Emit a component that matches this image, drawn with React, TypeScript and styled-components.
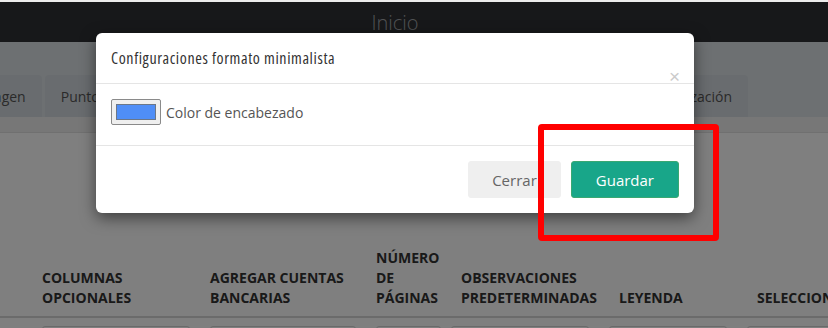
import React from 'react'
import styled, { createGlobalStyle } from 'styled-components'

const GlobalStyle = createGlobalStyle`
  html, body {
    margin: 0;
    padding: 0;
    width: 828px;
    height: 328px;
    overflow: hidden;
    background: #ececec;
    font-family: 'Open Sans', 'Noto Sans', sans-serif;
  }
  * { box-sizing: border-box; }
`

const tabs = ['Imagen', 'Puntos de venta', 'Encabezado', 'Formato']

const columns = [
  { label: 'Columnas opcionales', width: 168 },
  { label: 'Agregar cuentas bancarias', width: 166 },
  { label: 'Número de páginas', width: 85 },
  { label: 'Observaciones predeterminadas', width: 158 },
  { label: 'Leyenda', width: 138 },
  { label: 'Seleccionar', width: 140 },
]

const Frame = styled.div`
  padding-top: 2px;
  height: 328px;
`

const Stage = styled.div`
  position: relative;
  height: 326px;
  overflow: hidden;
  background: #ffffff;
`

const TopBar = styled.header`
  height: 40px;
  background: #2e3035;
  display: flex;
  align-items: center;
  justify-content: center;
  padding-right: 38px;
`

const PageTitle = styled.h1`
  margin: 0;
  font-family: 'Open Sans', sans-serif;
  font-weight: 300;
  font-size: 20px;
  color: #a2a4a8;
`

const TabBar = styled.nav`
  height: 75px;
  background: #dae0e4;
  display: flex;
  align-items: flex-end;
  gap: 3px;
  padding-right: 80px;
`

const Tab = styled.div<{ $first?: boolean; $last?: boolean }>`
  height: 42px;
  display: flex;
  align-items: center;
  padding: 0 16px;
  background: #d3d9de;
  border-radius: 4px 4px 0 0;
  font-size: 14px;
  color: #555;
  white-space: nowrap;
  margin-left: ${(p) => (p.$first ? '-39px' : p.$last ? 'auto' : '0')};
`

const SubStrip = styled.div`
  height: 16px;
  background: #eeeeee;
  border-bottom: 1px solid #e0e0e0;
`

const TableHead = styled.div`
  display: flex;
  align-items: flex-end;
  padding: 0 0 8px 42px;
  margin-top: 115px;
  border-bottom: 2px solid #d6d6d6;
`

const HeadCell = styled.div<{ $w: number; $nowrap?: boolean }>`
  flex: 0 0 ${(p) => p.$w}px;
  padding-right: 12px;
  font-size: 14px;
  font-weight: 700;
  line-height: 20px;
  text-transform: uppercase;
  color: #333;
  white-space: ${(p) => (p.$nowrap ? 'nowrap' : 'normal')};
`

const InputRow = styled.div`
  display: flex;
  padding: 8px 0 0 42px;
`

const FakeInput = styled.div<{ $w: number }>`
  flex: 0 0 ${(p) => p.$w}px;
  margin-right: ${(p) => (p.$w > 100 ? 20 : 10)}px;
  height: 34px;
  border: 1px solid #d4d4d4;
  border-radius: 3px;
`

const Backdrop = styled.div`
  position: absolute;
  inset: 0;
  background: rgba(0, 0, 0, 0.5);
  padding: 31px 0 0 96px;
`

const Modal = styled.div`
  position: relative;
  width: 598px;
  background: #fff;
  border-radius: 6px;
  box-shadow: 0 5px 15px rgba(0, 0, 0, 0.5);
`

const ModalHeader = styled.div`
  position: relative;
  padding: 15px;
  height: 51px;
  border-bottom: 1px solid #e5e5e5;
`

const ModalTitle = styled.h4`
  margin: 0;
  font-family: 'Open Sans', sans-serif;
  font-stretch: condensed;
  font-weight: 400;
  font-size: 16px;
  letter-spacing: 0.6px;
  line-height: 20px;
  color: #333;
`

const Close = styled.button`
  position: absolute;
  right: 14px;
  top: 34px;
  border: 0;
  background: none;
  padding: 0;
  font-family: 'Liberation Sans', sans-serif;
  font-size: 19px;
  line-height: 20px;
  color: #cbcbcb;
  cursor: pointer;
`

const ModalBody = styled.div`
  display: flex;
  align-items: center;
  gap: 5px;
  padding: 15px 15px 20px;
  border-bottom: 1px solid #e5e5e5;
`

const ColorSwatch = styled.div`
  width: 50px;
  height: 26px;
  border: 1px solid #8a8a8a;
  border-radius: 2px;
  background: #efefef;
  padding: 4px;
`

const SwatchFill = styled.div`
  height: 100%;
  background: #4f8ef7;
  border: 1px solid #6b7788;
`

const Label = styled.span`
  font-size: 14px;
  color: #555;
`

const ModalFooter = styled.div`
  display: flex;
  justify-content: flex-end;
  gap: 10px;
  padding: 15px;
`

const Button = styled.button<{ $primary?: boolean }>`
  height: 37px;
  padding: 0 ${(p) => (p.$primary ? 24 : 23)}px;
  border-radius: 3px;
  font-family: 'Open Sans', sans-serif;
  font-size: 15px;
  border: 1px solid ${(p) => (p.$primary ? '#3aa872' : '#efefef')};
  background: ${(p) => (p.$primary ? '#18a689' : '#efefef')};
  color: ${(p) => (p.$primary ? '#ffffff' : '#666666')};
  cursor: pointer;
`

const Annotation = styled.div`
  position: absolute;
  left: 538px;
  top: 122px;
  width: 181px;
  height: 117px;
  border: 6px solid #ff0000;
  border-radius: 4px;
  pointer-events: none;
`

export default function App() {
  return (
    <Frame>
      <GlobalStyle />
      <Stage>
        <TopBar>
          <PageTitle>Inicio</PageTitle>
        </TopBar>
        <TabBar>
          {tabs.map((t, i) => (
            <Tab key={t} $first={i === 0}>
              {t}
            </Tab>
          ))}
          <Tab $last>Personalización</Tab>
        </TabBar>
        <SubStrip />
        <TableHead>
          {columns.map((c, i) => (
            <HeadCell key={c.label} $w={c.width} $nowrap={i === columns.length - 1}>
              {c.label}
            </HeadCell>
          ))}
        </TableHead>
        <InputRow>
          {columns.map((c) => (
            <FakeInput key={c.label} $w={c.width - 20} />
          ))}
        </InputRow>
        <Backdrop>
          <Modal>
            <ModalHeader>
              <ModalTitle>Configuraciones formato minimalista</ModalTitle>
              <Close aria-label="Cerrar">×</Close>
            </ModalHeader>
            <ModalBody>
              <ColorSwatch>
                <SwatchFill />
              </ColorSwatch>
              <Label>Color de encabezado</Label>
            </ModalBody>
            <ModalFooter>
              <Button>Cerrar</Button>
              <Button $primary>Guardar</Button>
            </ModalFooter>
          </Modal>
        </Backdrop>
        <Annotation />
      </Stage>
    </Frame>
  )
}
